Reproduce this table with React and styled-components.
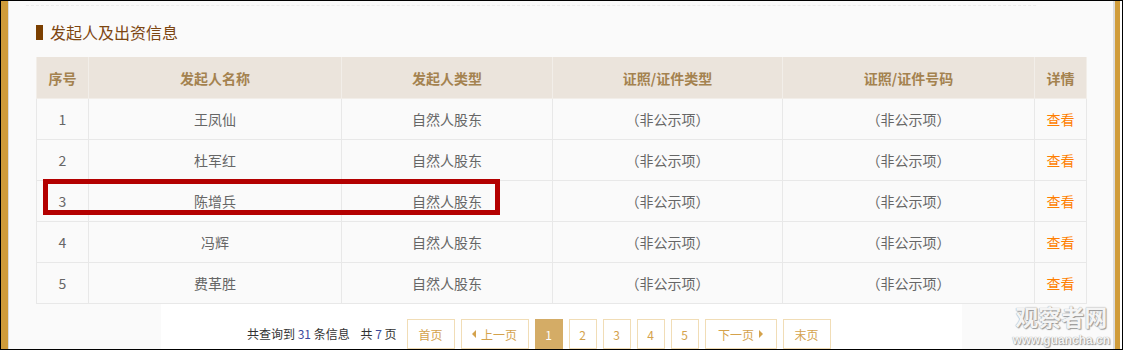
import React from "react";
import styled, { createGlobalStyle } from "styled-components";

const GlobalStyle = createGlobalStyle`
  html, body {
    margin: 0;
    padding: 0;
    background: #ffffff;
  }
  body {
    font-family: "Noto Sans CJK SC", "Liberation Sans", sans-serif;
    overflow: hidden;
  }
`;

const Frame = styled.div`
  box-sizing: border-box;
  display: flex;
  width: 1123px;
  height: 350px;
  border: 1px solid #000;
  background: #ffffff;
  overflow: hidden;
`;

const GoldBar = styled.div`
  flex: 0 0 ${(p) => p.$w}px;
  background: #d09c3a;
`;

const Rule = styled.div`
  flex: 0 0 ${(p) => p.$w}px;
  background: #dcdcdc;
`;

const Gap = styled.div`
  flex: 0 0 ${(p) => p.$w}px;
  background: #ffffff;
`;

const Content = styled.div`
  position: relative;
  flex: 1 1 auto;
  background: #fafafa;
  padding: 0 26px 0 27px;
  display: flex;
  flex-direction: column;
`;

const Dashed = styled.div`
  margin: 4px 0 0 -10px;
  width: 1010px;
  border-top: 1px dashed #ececec;
`;

const Title = styled.h3`
  display: flex;
  align-items: center;
  gap: 7px;
  margin: 18px 0 0;
  height: 16px;
  font-size: 16px;
  font-weight: normal;
  line-height: 16px;
  color: #7d4612;
`;

const Marker = styled.span`
  display: block;
  width: 7px;
  height: 15px;
  background: #7b3f00;
`;

const TableWrap = styled.div`
  position: relative;
  margin-top: 17px;
  width: 1050px;
`;

const Table = styled.table`
  width: 1050px;
  border-collapse: collapse;
  table-layout: fixed;
  font-size: 14px;
`;

const Th = styled.th`
  height: 41px;
  padding: 0;
  background: #ebe4dc;
  border: 1px solid #f2eee9;
  border-top: none;
  color: #a4824f;
  font-weight: bold;
  text-align: center;
`;

const Td = styled.td`
  height: 40px;
  padding: 0;
  background: #fafafa;
  border: 1px solid #e8e8e8;
  color: #666666;
  text-align: center;
`;

const Link = styled.a`
  color: #ff7f00;
  text-decoration: none;
`;

const Highlight = styled.div`
  position: absolute;
  left: 7px;
  top: 122px;
  width: 457px;
  height: 36px;
  box-sizing: border-box;
  border: 5px solid #b30000;
  pointer-events: none;
`;

const PagerBand = styled.div`
  align-self: flex-start;
  margin-left: 125px;
  width: 801px;
  height: 60px;
  background: #ffffff;
  padding: 15px 0 0 86px;
  box-sizing: border-box;
  display: flex;
  align-items: flex-start;
  gap: 6px;
`;

const Summary = styled.span`
  font-size: 12px;
  color: #333333;
  line-height: 30px;
  margin-right: 4px;
  white-space: nowrap;
`;

const Num = styled.span`
  color: #3a4a9c;
`;

const PageBtn = styled.span`
  box-sizing: border-box;
  display: inline-flex;
  align-items: center;
  justify-content: center;
  gap: 5px;
  height: 30px;
  width: ${(p) => p.$w}px;
  border: 1px solid ${(p) => (p.$active ? "#d4ac66" : "#f1ddb6")};
  background: ${(p) => (p.$active ? "#d4ac66" : "#ffffff")};
  color: ${(p) => (p.$active ? "#ffffff" : "#d4a24c")};
  font-size: 12px;
`;

const Arrow = styled.i`
  width: 0;
  height: 0;
  border-top: 4px solid transparent;
  border-bottom: 4px solid transparent;
  ${(p) =>
    p.$dir === "left"
      ? "border-right: 4px solid #d4a24c;"
      : "border-left: 4px solid #d4a24c;"}
`;

const Watermark = styled.div`
  position: absolute;
  right: 3px;
  bottom: 3px;
  display: flex;
  flex-direction: column;
  align-items: center;
  gap: 7px;
  color: #f4f4f4;
  text-shadow: 0 0 1px #8a8a8a, 1px 1px 1px #9a9a9a;
  pointer-events: none;
`;

const WmTitle = styled.span`
  display: block;
  font-size: 23px;
  font-weight: bold;
  line-height: 23px;
`;

const WmUrl = styled.span`
  display: block;
  font-family: "Liberation Sans", sans-serif;
  font-size: 12px;
  font-weight: bold;
  line-height: 11px;
`;

const columns = [
  { title: "序号", w: 52 },
  { title: "发起人名称", w: 253 },
  { title: "发起人类型", w: 211 },
  { title: "证照/证件类型", w: 230 },
  { title: "证照/证件号码", w: 252 },
  { title: "详情", w: 52 },
];

const rows = ["王凤仙", "杜军红", "陈增兵", "冯辉", "费革胜"];

const pages = [
  { label: "首页", w: 48 },
  { label: "上一页", w: 68, arrow: "left" },
  { label: "1", w: 28, active: true },
  { label: "2", w: 28 },
  { label: "3", w: 28 },
  { label: "4", w: 28 },
  { label: "5", w: 28 },
  { label: "下一页", w: 72, arrow: "right" },
  { label: "末页", w: 48 },
];

export default function App() {
  return (
    <>
      <GlobalStyle />
      <Frame>
        <GoldBar $w={7} />
        <Rule $w={1} />
        <Content>
          <Dashed />
          <Title>
            <Marker />
            发起人及出资信息
          </Title>
          <TableWrap>
            <Table>
              <colgroup>
                {columns.map((c) => (
                  <col key={c.title} style={{ width: c.w }} />
                ))}
              </colgroup>
              <thead>
                <tr>
                  {columns.map((c) => (
                    <Th key={c.title}>{c.title}</Th>
                  ))}
                </tr>
              </thead>
              <tbody>
                {rows.map((name, i) => (
                  <tr key={name}>
                    <Td>{i + 1}</Td>
                    <Td>{name}</Td>
                    <Td>自然人股东</Td>
                    <Td>（非公示项）</Td>
                    <Td>（非公示项）</Td>
                    <Td>
                      <Link href="#">查看</Link>
                    </Td>
                  </tr>
                ))}
              </tbody>
            </Table>
            <Highlight />
          </TableWrap>
          <PagerBand>
            <Summary>
              共查询到 <Num>31</Num> 条信息&nbsp;&nbsp;&nbsp;&nbsp;共 <Num>7</Num> 页
            </Summary>
            {pages.map((p) => (
              <PageBtn key={p.label} $w={p.w} $active={p.active}>
                {p.arrow === "left" && <Arrow $dir="left" />}
                {p.label}
                {p.arrow === "right" && <Arrow $dir="right" />}
              </PageBtn>
            ))}
          </PagerBand>
          <Watermark>
            <WmTitle>观察者网</WmTitle>
            <WmUrl>www.guancha.cn</WmUrl>
          </Watermark>
        </Content>
        <Rule $w={2} />
        <GoldBar $w={5} />
        <Gap $w={2} />
      </Frame>
    </>
  );
}
